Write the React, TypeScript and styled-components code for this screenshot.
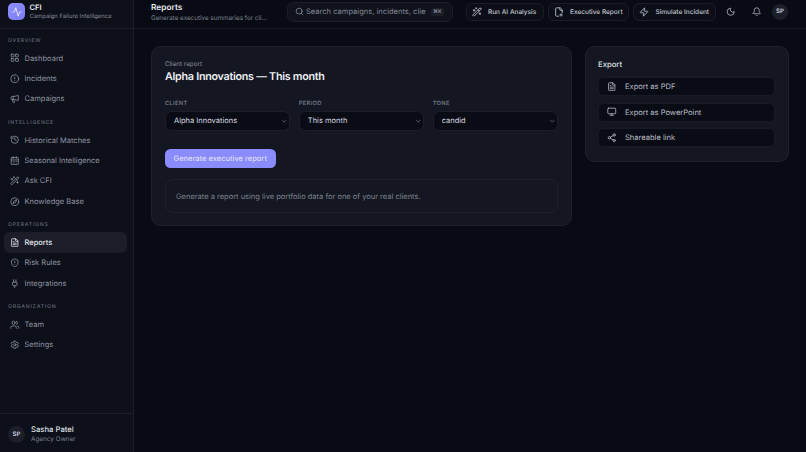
import styled, { createGlobalStyle } from "styled-components";
import {
  Activity,
  Bell,
  CalendarDays,
  ChevronDown,
  CircleAlert,
  Compass,
  FilePlus2,
  FileText,
  History,
  LayoutGrid,
  Megaphone,
  Monitor,
  Moon,
  Plug,
  Search,
  Settings,
  Share2,
  ShieldAlert,
  Users,
  WandSparkles,
  Zap,
} from "lucide-react";

const GlobalStyle = createGlobalStyle`
  html, body {
    margin: 0;
    height: 100%;
    background: #090b14;
    overflow: hidden;
  }
  #root { height: 100%; }
  * {
    box-sizing: border-box;
    text-rendering: geometricPrecision;
  }
`;

const Shell = styled.div`
  display: flex;
  height: 452px;
  width: 806px;
  background: #090b14;
  color: #e6e8ef;
  font-family: Inter, "Liberation Sans", sans-serif;
`;

const Sidebar = styled.aside`
  width: 134px;
  flex: none;
  display: flex;
  flex-direction: column;
  background: #0d0f19;
  border-right: 1px solid #1b1e29;
`;

const Brand = styled.div`
  height: 28.5px;
  flex: none;
  display: flex;
  align-items: flex-start;
  gap: 4.5px;
  padding: 3px 8px 0;
  border-bottom: 1px solid #1b1e29;
`;

const LogoBox = styled.div`
  width: 17px;
  height: 17px;
  border-radius: 5px;
  background: linear-gradient(135deg, #8f90fb, #7b7df2);
  display: flex;
  align-items: center;
  justify-content: center;
  color: #f2f2ff;
`;

const BrandText = styled.div`
  display: flex;
  flex-direction: column;
`;

const BrandName = styled.div`
  font-size: 7.5px;
  line-height: 9px;
  font-weight: 600;
  color: #eceef4;
`;

const BrandSub = styled.div`
  font-size: 5.9px;
  line-height: 9px;
  color: #868b99;
`;

const Nav = styled.nav`
  flex: 1;
  padding: 9.5px 6.5px 0 4px;
`;

const Section = styled.div`
  margin-bottom: 10.8px;
`;

const SectionLabel = styled.div`
  font-size: 5.2px;
  line-height: 7px;
  height: 8px;
  letter-spacing: 0.75px;
  text-transform: uppercase;
  font-weight: 500;
  color: #646977;
  padding-left: 4px;
  margin-bottom: 2px;
`;

const NavItem = styled.a<{ $active?: boolean }>`
  display: flex;
  align-items: center;
  gap: 5px;
  height: 20.4px;
  padding-left: 6px;
  border-radius: 6px;
  font-size: 7.5px;
  font-weight: ${(p) => (p.$active ? 500 : 400)};
  color: ${(p) => (p.$active ? "#e8eaf0" : "#8f94a2")};
  background: ${(p) => (p.$active ? "#1b1e29" : "transparent")};
`;

const UserRow = styled.div`
  height: 39px;
  flex: none;
  display: flex;
  align-items: center;
  gap: 6px;
  padding: 2px 8px 0;
  border-top: 1px solid #1b1e29;
`;

const Avatar = styled.div<{ $size: number }>`
  width: ${(p) => p.$size}px;
  height: ${(p) => p.$size}px;
  border-radius: 50%;
  background: #1c1f2a;
  display: flex;
  align-items: center;
  justify-content: center;
  font-size: 6px;
  font-weight: 600;
  color: #d5d8e0;
  flex: none;
`;

const UserText = styled.div`
  padding-top: 1px;
`;

const UserName = styled.div`
  font-size: 7.7px;
  line-height: 10px;
  font-weight: 500;
  color: #dfe1e8;
`;

const UserRole = styled.div`
  font-size: 6.4px;
  line-height: 9px;
  color: #7d8290;
`;

const Main = styled.main`
  flex: 1;
  min-width: 0;
  display: flex;
  flex-direction: column;
`;

const Topbar = styled.header`
  height: 28.5px;
  flex: none;
  display: flex;
  align-items: flex-start;
  padding-left: 17px;
  border-bottom: 1px solid #171a24;
`;

const PageHeading = styled.div`
  width: 136px;
  flex: none;
  padding-top: 2.5px;
`;

const PageTitle = styled.div`
  font-size: 8.3px;
  line-height: 10px;
  font-weight: 600;
  color: #e9ebf1;
`;

const PageSub = styled.div`
  font-size: 6.3px;
  line-height: 10px;
  width: 119px;
  color: #7d8290;
  white-space: nowrap;
  overflow: hidden;
  text-overflow: ellipsis;
`;

const SearchBox = styled.div`
  width: 165.5px;
  height: 19.5px;
  margin-top: 2px;
  flex: none;
  display: flex;
  align-items: center;
  gap: 2.5px;
  padding: 0 8px 0 6.5px;
  border: 1px solid #1c1f2a;
  border-radius: 6.5px;
  background: #10121c;
  color: #8a8f9d;
`;

const SearchInput = styled.input`
  flex: 1;
  min-width: 0;
  padding: 0;
  border: 0;
  outline: 0;
  background: transparent;
  font-family: inherit;
  font-size: 7.55px;
  color: #e6e8ef;
  &::placeholder {
    color: #828795;
    opacity: 1;
  }
`;

const Kbd = styled.kbd`
  font-family: inherit;
  font-size: 5px;
  font-weight: 600;
  line-height: 8px;
  padding: 0 2px;
  margin-left: 3px;
  border-radius: 2.5px;
  background: #1b1e29;
  color: #8a8f9d;
`;

const Actions = styled.div`
  display: flex;
  align-items: center;
  gap: 4px;
  margin-left: 13px;
  margin-top: 3px;
`;

const ActionButton = styled.button<{ $width: number }>`
  width: ${(p) => p.$width}px;
  height: 17.5px;
  padding: 0 0 0 5px;
  display: flex;
  align-items: center;
  gap: 6.5px;
  border: 1px solid #1a1d27;
  border-radius: 6px;
  background: #0c0e17;
  font-family: inherit;
  font-size: 6.5px;
  font-weight: 500;
  color: #c3c6d0;
`;

const IconButton = styled.button<{ $left: number }>`
  width: 14px;
  height: 17.5px;
  margin-left: ${(p) => p.$left}px;
  padding: 0;
  border: 0;
  background: transparent;
  display: flex;
  align-items: center;
  justify-content: center;
  color: #b5b8c3;
`;

const TopAvatar = styled(Avatar)`
  margin-left: 4px;
  margin-top: -0.5px;
`;

const Content = styled.div`
  padding: 17.5px 17px 0;
  display: grid;
  grid-template-columns: 421px 204px;
  column-gap: 13px;
  align-items: start;
`;

const Card = styled.section`
  background: #141721;
  border: 1px solid #1e212c;
  border-radius: 9.5px;
  padding: 12.5px 13px;
`;

const ExportCard = styled(Card)`
  padding: 12.5px 13px 14px 12px;
`;

const Eyebrow = styled.div`
  font-size: 6.3px;
  line-height: 9px;
  color: #8a8f9d;
`;

const CardTitle = styled.h2`
  margin: 1.5px 0 0;
  font-size: 10.75px;
  letter-spacing: -0.27px;
  line-height: 14px;
  font-weight: 600;
  color: #eceef4;
`;

const FieldRow = styled.div`
  display: grid;
  grid-template-columns: repeat(3, 1fr);
  gap: 8.5px;
  margin-top: 15.5px;
`;

const Field = styled.label`
  display: flex;
  flex-direction: column;
  min-width: 0;
`;

const FieldLabel = styled.span`
  font-size: 5.7px;
  line-height: 8px;
  letter-spacing: 0.35px;
  text-transform: uppercase;
  font-weight: 500;
  color: #7d8290;
  margin-bottom: 3.5px;
`;

const SelectWrap = styled.span`
  position: relative;
  display: block;
  color: #8a8f9d;
  svg {
    position: absolute;
    right: 2.5px;
    top: 6.5px;
    pointer-events: none;
  }
`;

const Select = styled.select`
  display: block;
  width: 100%;
  height: 19.5px;
  padding: 0 0 0 8px;
  appearance: none;
  border: 1px solid #1c1f2a;
  border-radius: 6.5px;
  background: #0a0c15;
  color: #d6d8e0;
  font-family: inherit;
  font-size: 7.5px;
  outline: 0;
`;

const PrimaryButton = styled.button`
  display: block;
  width: 110.5px;
  height: 19.5px;
  margin-top: 18px;
  padding: 0;
  border: 0;
  border-radius: 5.5px;
  background: #8b8cfb;
  font-family: inherit;
  font-size: 7.5px;
  font-weight: 500;
  color: #dcdcfb;
`;

const Notice = styled.div`
  height: 33.5px;
  margin-top: 11px;
  padding: 1px 0 0 10px;
  display: flex;
  align-items: center;
  border: 1px solid #1e212c;
  border-radius: 8px;
  font-size: 7.5px;
  color: #7d8290;
`;

const ExportTitle = styled.div`
  font-size: 7.7px;
  line-height: 10px;
  font-weight: 500;
  color: #dfe1e8;
`;

const ExportList = styled.div`
  display: flex;
  flex-direction: column;
  gap: 6.5px;
  margin-top: 7.5px;
`;

const ExportButton = styled.button`
  height: 19px;
  padding: 0 0 0 8px;
  display: flex;
  align-items: center;
  gap: 8.5px;
  border: 1px solid #181b25;
  border-radius: 5.5px;
  background: #0a0c15;
  font-family: inherit;
  font-size: 7.55px;
  color: #b9bcc7;
`;

type IconType = typeof Activity;

const navSections: { label: string; items: { text: string; icon: IconType; active?: boolean }[] }[] = [
  {
    label: "Overview",
    items: [
      { text: "Dashboard", icon: LayoutGrid },
      { text: "Incidents", icon: CircleAlert },
      { text: "Campaigns", icon: Megaphone },
    ],
  },
  {
    label: "Intelligence",
    items: [
      { text: "Historical Matches", icon: History },
      { text: "Seasonal Intelligence", icon: CalendarDays },
      { text: "Ask CFI", icon: WandSparkles },
      { text: "Knowledge Base", icon: Compass },
    ],
  },
  {
    label: "Operations",
    items: [
      { text: "Reports", icon: FileText, active: true },
      { text: "Risk Rules", icon: ShieldAlert },
      { text: "Integrations", icon: Plug },
    ],
  },
  {
    label: "Organization",
    items: [
      { text: "Team", icon: Users },
      { text: "Settings", icon: Settings },
    ],
  },
];

const topActions: { text: string; icon: IconType; width: number }[] = [
  { text: "Run AI Analysis", icon: WandSparkles, width: 78 },
  { text: "Executive Report", icon: FilePlus2, width: 81.5 },
  { text: "Simulate Incident", icon: Zap, width: 83 },
];

const exportsList: { text: string; icon: IconType }[] = [
  { text: "Export as PDF", icon: FileText },
  { text: "Export as PowerPoint", icon: Monitor },
  { text: "Shareable link", icon: Share2 },
];

const selects = [
  { label: "Client", value: "Alpha Innovations" },
  { label: "Period", value: "This month" },
  { label: "Tone", value: "candid" },
];

const App = () => {
  return (
    <>
      <GlobalStyle />
      <Shell>
        <Sidebar>
          <Brand>
            <LogoBox>
              <Activity size={10} strokeWidth={2} />
            </LogoBox>
            <BrandText>
              <BrandName>CFI</BrandName>
              <BrandSub>Campaign Failure Intelligence</BrandSub>
            </BrandText>
          </Brand>
          <Nav>
            {navSections.map((section) => (
              <Section key={section.label}>
                <SectionLabel>{section.label}</SectionLabel>
                {section.items.map(({ text, icon: Icon, active }) => (
                  <NavItem key={text} $active={active}>
                    <Icon size={9.5} strokeWidth={2} />
                    {text}
                  </NavItem>
                ))}
              </Section>
            ))}
          </Nav>
          <UserRow>
            <Avatar $size={17}>SP</Avatar>
            <UserText>
              <UserName>Sasha Patel</UserName>
              <UserRole>Agency Owner</UserRole>
            </UserText>
          </UserRow>
        </Sidebar>
        <Main>
          <Topbar>
            <PageHeading>
              <PageTitle>Reports</PageTitle>
              <PageSub>Generate executive summaries for clients</PageSub>
            </PageHeading>
            <SearchBox>
              <Search size={9} strokeWidth={2} />
              <SearchInput placeholder="Search campaigns, incidents, clients" />
              <Kbd>⌘K</Kbd>
            </SearchBox>
            <Actions>
              {topActions.map(({ text, icon: Icon, width }) => (
                <ActionButton key={text} $width={width}>
                  <Icon size={10} strokeWidth={2} />
                  {text}
                </ActionButton>
              ))}
              <IconButton $left={4}>
                <Moon size={9.5} strokeWidth={2} />
              </IconButton>
              <IconButton $left={8}>
                <Bell size={9.5} strokeWidth={2} />
              </IconButton>
              <TopAvatar $size={16}>SP</TopAvatar>
            </Actions>
          </Topbar>
          <Content>
            <Card>
              <Eyebrow>Client report</Eyebrow>
              <CardTitle>Alpha Innovations — This month</CardTitle>
              <FieldRow>
                {selects.map(({ label, value }) => (
                  <Field key={label}>
                    <FieldLabel>{label}</FieldLabel>
                    <SelectWrap>
                      <Select defaultValue={value}>
                        <option>{value}</option>
                      </Select>
                      <ChevronDown size={6.5} strokeWidth={2.2} />
                    </SelectWrap>
                  </Field>
                ))}
              </FieldRow>
              <PrimaryButton>Generate executive report</PrimaryButton>
              <Notice>Generate a report using live portfolio data for one of your real clients.</Notice>
            </Card>
            <ExportCard>
              <ExportTitle>Export</ExportTitle>
              <ExportList>
                {exportsList.map(({ text, icon: Icon }) => (
                  <ExportButton key={text}>
                    <Icon size={9.5} strokeWidth={2} />
                    {text}
                  </ExportButton>
                ))}
              </ExportList>
            </ExportCard>
          </Content>
        </Main>
      </Shell>
    </>
  );
};

export default App;
